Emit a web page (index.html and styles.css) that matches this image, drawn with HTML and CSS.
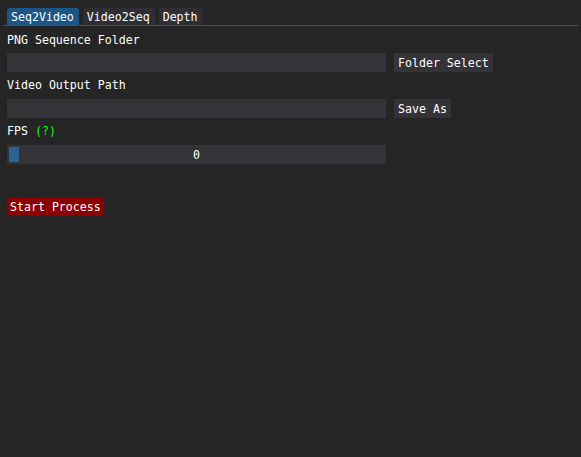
FILE: index.html
```html
<!DOCTYPE html>
<html>
<head>
<meta charset="utf-8">
<link rel="stylesheet" href="styles.css">
</head>
<body>
<div class="window">
  <div class="tabbar">
    <div class="tab active">Seq2Video</div>
    <div class="tab">Video2Seq</div>
    <div class="tab">Depth</div>
  </div>
  <div class="label first">PNG Sequence Folder</div>
  <div class="row r1">
    <div class="input"></div>
    <div class="button">Folder Select</div>
  </div>
  <div class="label">Video Output Path</div>
  <div class="row">
    <div class="input"></div>
    <div class="button">Save As</div>
  </div>
  <div class="label">FPS <span class="help">(?)</span></div>
  <div class="row">
    <div class="slider"><div class="grab"></div><span class="val">0</span></div>
  </div>
  <div class="start">Start Process</div>
</div>
</body>
</html>
```

FILE: styles.css
```css
html, body {
  margin: 0;
  padding: 0;
  background: #252525;
  height: 100%;
}
body {
  font-family: "DejaVu Sans Mono", "Liberation Mono", monospace;
  font-size: 11.6px;
  color: #ffffff;
  line-height: 13px;
}
.window {
  display: flex;
  flex-direction: column;
  align-items: flex-start;
  padding: 8px 0 0 7px;
}
.tabbar {
  display: flex;
  gap: 4px;
  align-self: stretch;
  margin-left: -4px;
  margin-right: 2px;
  padding-left: 4px;
  border-bottom: 1px solid #1d5a8c;
}
.tab {
  height: 16px;
  padding: 1px 5px 0 4px;
  line-height: 17px;
  background: #2e2e34;
  border-radius: 3px 3px 0 0;
}
.tab.active {
  background: #1b5686;
}
.label {
  margin-top: 7px;
  height: 13px;
}
.label.first {
  margin-top: 8px;
}
.row {
  display: flex;
  gap: 8px;
  margin-top: 7px;
}
.row.r1 {
  margin-top: 6px;
}
.input {
  width: 379px;
  height: 19px;
  background: #333338;
}
.button {
  height: 18px;
  padding: 1px 4px 0;
  line-height: 19px;
  background: #333338;
}
.help {
  color: #00ff00;
}
.slider {
  position: relative;
  width: 379px;
  height: 18px;
  padding-top: 1px;
  line-height: 19px;
  background: #333338;
  text-align: center;
}
.grab {
  position: absolute;
  left: 2px;
  top: 2px;
  width: 10px;
  height: 15px;
  background: #2a6394;
  border-radius: 1px;
}
.start {
  margin-top: 33px;
  height: 18px;
  padding: 1px 3px 0;
  line-height: 19px;
  background: #8b0000;
  border-radius: 3px;
}
```
